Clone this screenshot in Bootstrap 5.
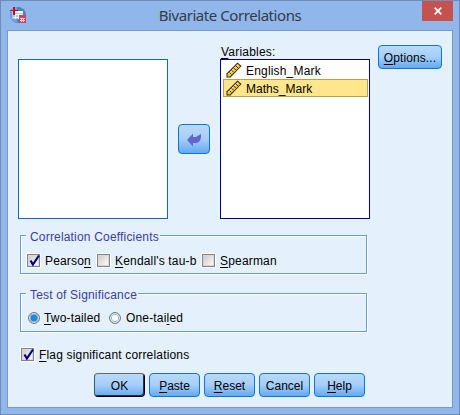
<!DOCTYPE html>
<html lang="en">
<head>
<meta charset="utf-8">
<title>Bivariate Correlations</title>
<link href="https://cdn.jsdelivr.net/npm/bootstrap@5.3.0/dist/css/bootstrap.min.css" rel="stylesheet">
<style>
body{font:12px/14px "Liberation Sans",Arial,sans-serif;color:#000;overflow:hidden}
.window{width:460px;height:415px;background:#91b6ea;border:1px solid #6e8dbb;padding:0 6px 6px}
.titlebar{height:29px}
.titlebar h1{font:15px/20px "Noto Sans","Open Sans",sans-serif;color:#323b49;letter-spacing:-.44px;padding:4px 4px 0 0}
.app-icon{width:16px;height:16px;margin:6px 0 0 3px}
.close-btn{width:31px;height:20px;background:#c75050}
.client{height:378px;background:#e4f0fc;border:1px solid #7799c6;padding:14px 10px 0}
u{text-decoration-thickness:1px;text-underline-offset:2px;text-decoration-skip-ink:none}
.pane{width:150px;height:160px;background:#fff;border:1px solid #1569bd}
.source{margin-top:14px}
.pane.target{border-color:#00009c;padding:1px 1px 0 2px}
.target-col label{height:14px;padding-left:1px;letter-spacing:.2px}
.entry{height:18px;border:1px solid transparent;padding-left:2px;gap:4px;letter-spacing:.18px}
.entry span{padding-top:2px}
.entry.picked{background:#ffe58b;border-color:#b5a054;letter-spacing:.02px}
.push{border:1px solid #0b77d5;border-radius:4px;background:linear-gradient(#b9d9fb,#a5cefa 50%,#64a9f0);color:#000;font-size:12px;line-height:14px;padding:1px 0 0;height:24px;width:51px}
.push.options{width:64px;letter-spacing:.1px;margin-left:8px}
.push.move{width:32px;height:30px;margin:79px 10px 0}
.push.preferred{border-color:#666 #000 #000 #456;box-shadow:inset -1px -1px 0 #17345b}
.group{width:347px;height:39px;border:1px solid #6d9ecf;box-shadow:1px 1px 0 #fff,inset 1px 1px 0 #fff;margin-left:2px;padding:0 6px}
.caption-text{display:block;width:max-content;background:#e4f0fc;color:#3d3da5;margin:-6px 0 0 -1px;padding:0 1px 0 4px;letter-spacing:.18px}
.coefficients{margin-top:16px}
.significance{margin-top:19px}
.tick{width:13px;height:13px;flex:none;border:1px solid #858585;background:linear-gradient(135deg,#c8c8c8,#fff);box-shadow:0 0 0 1px #fafcff,inset 0 0 0 1px #d8d8d8}
.tick svg{display:block;overflow:visible;margin:-1px 0 0 -1px}
.dot{width:12px;height:12px;flex:none;margin-left:1px}
.choices{margin-top:9px;height:15px}
.significance .choices{height:14px}
.choices label,.flag label{margin-left:5px;letter-spacing:.17px}
.choices .pearson{width:52px}
.choices .kendall{width:87px}
.choices .two{width:64px;margin-left:4px}
.flag{height:15px;margin:15px 0 0 3px}
.buttons{gap:4px;margin:11px 0 0 76px}
</style>
<script src="https://cdn.jsdelivr.net/npm/bootstrap@5.3.0/dist/js/bootstrap.bundle.min.js"></script>
</head>
<body>
<svg class="d-none">
 <symbol id="ruler" viewBox="0 0 16 16">
  <path d="M.5 11.500 11.500.5l4 3.500L4.500 15.500H.5z" fill="#2b2412"/>
  <path d="M1.500 12 11.500 2l2.700 2.200L4 14.500H1.500z" fill="#ffc91f"/>
  <path d="M2.500 12 12 2.500" stroke="#fff0b0"/>
  <path d="m3.500 10.500 2 2m.2-4.200 2 2m.2-4.200 2 2M10 4l2 2" stroke="#3a2c08"/>
 </symbol>
 <symbol id="check" viewBox="0 0 13 13"><path d="m3.500 6.500 2.400 4L12 1.500" fill="none" stroke="#000080" stroke-width="2.200"/></symbol>
</svg>
<main class="window">
 <header class="titlebar d-flex justify-content-between">
  <svg class="app-icon" viewBox="0 0 16 16"><defs><clipPath id="globe"><circle cx="8" cy="8" r="8"/></clipPath></defs>
   <g clip-path="url(#globe)"><path d="M0 0h16v16H0z" fill="#4686bf"/><path d="M0 0h7v16H0z" fill="#6ba4d4"/><path d="M2 4h11v8H2z" fill="#a8c9e7"/><path d="M5 4h8v2H5z" fill="#fff"/><path d="M3 7.500h10M3 10.500h6M5.500 7v5m3-5v5" stroke="#e7f2fb"/></g>
   <path d="M0 3h8v1H0zM3 0h2v8H3z" fill="#d4002f"/><path d="M9 8h7v8H9z" fill="#d94057"/><path d="M10 11h5v1h-5zM10 13h5v1h-5zM11 11h1v4h-1zM13 11h1v4h-1z" fill="#fbd4da"/>
  </svg>
  <h1 class="m-0 ps-3">Bivariate Correlations</h1>
  <div class="close-btn d-flex align-items-center justify-content-center"><svg width="8" height="8"><path d="m.7.7 6.600 6.600m0-6.600L.7 7.300" stroke="#fff" stroke-width="1.800"/></svg></div>
 </header>
 <section class="client">
  <div class="d-flex align-items-start">
   <div class="pane source"></div>
   <button class="push move d-flex align-items-center justify-content-center"><svg width="14" height="14" viewBox="0 0 14 14"><path d="M0 7 6 .5V4h3l5-3v2c0 5-3 7-5 7H6v3.500z" fill="#6463d1"/></svg></button>
   <div class="target-col"><label class="d-block"><u>V</u>ariables:</label>
    <div class="pane target">
     <div class="entry d-flex align-items-center"><svg width="16" height="16"><use href="#ruler"/></svg><span>English_Mark</span></div>
     <div class="entry picked d-flex align-items-center"><svg width="16" height="16"><use href="#ruler"/></svg><span>Maths_Mark</span></div>
    </div>
   </div>
   <button class="push options"><u>O</u>ptions...</button>
  </div>
  <div class="group coefficients">
   <span class="caption-text">Correlation Coefficients</span>
   <div class="choices d-flex align-items-center">
    <span class="tick"><svg width="13" height="13"><use href="#check"/></svg></span><label class="pearson">Pearso<u>n</u></label>
    <span class="tick"></span><label class="kendall"><u>K</u>endall's tau-b</label>
    <span class="tick"></span><label><u>S</u>pearman</label>
   </div>
  </div>
  <div class="group significance">
   <span class="caption-text">Test of Significance</span>
   <div class="choices d-flex align-items-center">
    <svg class="dot" viewBox="0 0 12 12"><circle cx="6" cy="6" r="5.400" fill="#fff" stroke="#666"/><circle cx="6" cy="6" r="4" fill="#2388dd" stroke="#8abbe5"/></svg><label class="two"><u>T</u>wo-tailed</label>
    <svg class="dot" viewBox="0 0 12 12"><circle cx="6" cy="6" r="5.400" fill="#fff" stroke="#666"/><circle cx="6" cy="6" r="3.700" fill="#fff" stroke="#8cb8df"/></svg><label>One-tai<u>l</u>ed</label>
   </div>
  </div>
  <div class="flag d-flex align-items-center"><span class="tick"><svg width="13" height="13"><use href="#check"/></svg></span><label><u>F</u>lag significant correlations</label></div>
  <div class="buttons d-flex">
   <button class="push preferred">OK</button><button class="push"><u>P</u>aste</button><button class="push"><u>R</u>eset</button><button class="push">Cancel</button><button class="push"><u>H</u>elp</button>
  </div>
 </section>
</main>
</body>
</html>
